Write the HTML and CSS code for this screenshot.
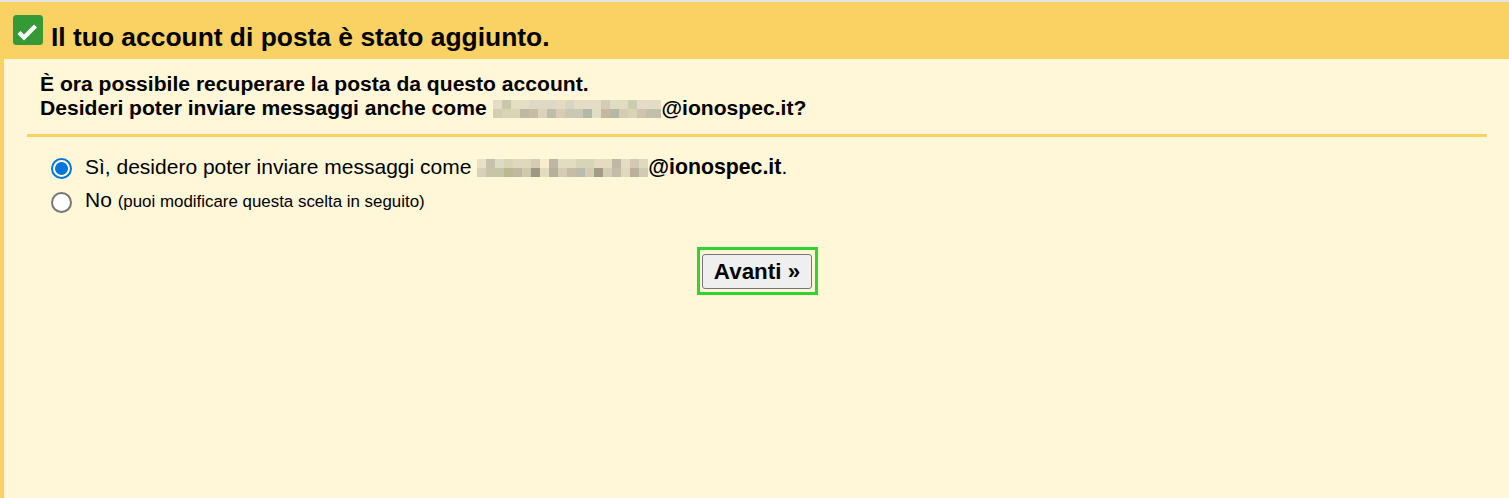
FILE: index.html
```html
<!DOCTYPE html>
<html lang="it">
<head>
  <meta charset="UTF-8" />
  <title>Account di posta aggiunto</title>
  <link rel="stylesheet" href="styles.css">
</head>
<body>

  <div class="header">
    <svg class="check-icon" viewBox="0 0 30 30" aria-hidden="true">
      <rect x="0" y="0" width="30" height="30" rx="3.5" fill="#359a35"/>
      <path d="M6 17.5l5 5L22.5 11" fill="none" stroke="#fff" stroke-width="4.2"/>
    </svg>
    <h1>Il tuo account di posta è stato aggiunto.</h1>
  </div>

  <div class="content">
    <div class="intro">
      È ora possibile recuperare la posta da questo account.<br>
      Desideri poter inviare messaggi anche come <span class="blur blur-intro"></span>@ionospec.it?
    </div>

    <div class="options">
      <label class="option">
        <input type="radio" name="sendAs" checked>
        <span>Sì, desidero poter inviare messaggi come <span class="blur blur-option"></span><b>@ionospec.it</b>.</span>
      </label>
      <label class="option">
        <input type="radio" name="sendAs">
        <span>No <small>(puoi modificare questa scelta in seguito)</small></span>
      </label>
    </div>

    <div class="actions">
      <div class="highlight">
        <button type="button">Avanti »</button>
      </div>
    </div>
  </div>

</body>
</html>
```

FILE: styles.css
```css
* {
  margin: 0;
  padding: 0;
  box-sizing: border-box;
}

html, body {
  height: 100%;
}

body {
  font-family: "Liberation Sans", Arial, sans-serif;
  color: #000;
  background: #fff7d7;
  border-top: 2px solid #e3e3e3;
  overflow: hidden;
  display: flex;
  flex-direction: column;
}

/* Barra in alto */
.header {
  height: 57px;
  background: #fad163;
  display: flex;
  align-items: flex-start;
  padding: 13px 0 0 13px;
}

.check-icon {
  width: 30px;
  height: 30px;
  flex-shrink: 0;
}

.header h1 {
  font-size: 26.4px;
  font-weight: bold;
  line-height: 28px;
  margin: 8px 0 0 8px;
}

/* Contenuto */
.content {
  flex: 1;
  border-left: 4px solid #fad163;
  padding: 0 22px 0 23px;
}

.intro {
  font-size: 21.1px;
  font-weight: bold;
  line-height: 24px;
  padding: 13px 0 14px 13px;
  border-bottom: 3px solid #fad163;
}

.blur {
  display: inline-block;
  height: 18px;
  vertical-align: -3px;
  background-repeat: no-repeat;
  background-size: 100% 9px;
  background-position: 0 0, 0 9px;
}

.blur-intro {
  width: 168px;
  margin-right: 1px;
  background-image:
    linear-gradient(90deg, #e4dcc4 0 9px, #c6c8ac 9px 18px, #e4dec4 18px 36px, #ddd9c4 36px 63px, #e4dac0 63px 72px, #d6d6c2 72px 81px, #e4dcc4 81px 108px, #d4ccb4 108px 117px, #e0dcc2 117px 135px, #ccccb0 135px 144px, #e4dcc6 144px 168px),
    linear-gradient(90deg, #d4ccb4 0 9px, #d8d4b4 9px 27px, #bcb8a4 27px 36px, #c8bca4 36px 45px, #dad2ba 45px 54px, #c0bcaa 54px 63px, #d8ccb4 63px 72px, #c8c8b4 72px 90px, #b4b8a8 90px 99px, #e0dcc6 99px 108px, #c4b8a0 108px 117px, #b4b8a4 117px 126px, #d4ccb4 126px 135px, #d8d4b8 135px 144px, #d0c4ac 144px 153px, #c0c0ac 153px 168px);
}

.blur-option {
  width: 171px;
  background-image:
    linear-gradient(90deg, #e8e0c8 0 9px, #c8c0a8 9px 18px, #dcdcc4 18px 27px, #d8d4b4 27px 36px, #e0d8bc 36px 54px, #d4ccb4 54px 63px, #f8eccc 63px 72px, #bcb8a4 72px 81px, #e4dcc0 81px 99px, #d8d4b8 99px 117px, #e4dcc0 117px 135px, #c0b8a4 135px 144px, #e4dcc4 144px 153px, #d4c8b0 153px 162px, #e0d8c0 162px 171px),
    linear-gradient(90deg, #d8d0b8 0 9px, #c8c4a8 9px 27px, #bcb890 27px 36px, #c0b8a0 36px 45px, #d0c8ac 45px 54px, #9c9884 54px 63px, #e4dcc0 63px 72px, #b4b09c 72px 81px, #d4ccb4 81px 90px, #c8bca4 90px 99px, #bcbcac 99px 108px, #d4ccb4 108px 117px, #a09c88 117px 126px, #d4ccb4 126px 135px, #c4bca8 135px 144px, #e0d8bc 144px 153px, #bcb09c 153px 162px, #d0ccb4 162px 171px);
}

/* Scelta */
.options {
  padding: 14px 0 0 24px;
}

.option {
  display: flex;
  align-items: center;
  height: 34px;
  font-size: 21px;
  line-height: 24px;
}

.option b {
  font-size: 21.3px;
}

.option span {
  position: relative;
  top: -1px;
}

.option input {
  appearance: none;
  width: 21px;
  height: 21px;
  margin-right: 13px;
  background: #fff;
  border: 2px solid #767676;
  border-radius: 50%;
}

.option input:checked {
  border-color: #0075d9;
  background: radial-gradient(circle, #0075d9 0 6px, #fff 6.8px);
}

.option small {
  font-size: 16.9px;
}

.option .blur {
  position: static;
}

/* Pulsante */
.actions {
  display: flex;
  justify-content: center;
  padding: 28px 0 0 0;
}

.highlight {
  border: 3px solid #32d232;
  padding: 4px 3px 3px 2px;
  margin-left: 1px;
}

.highlight button {
  display: block;
  width: 110px;
  height: 35px;
  font-family: inherit;
  font-size: 22.4px;
  font-weight: bold;
  color: #000;
  background: #efefef;
  border: 1px solid #767676;
  border-radius: 3px;
}
```
